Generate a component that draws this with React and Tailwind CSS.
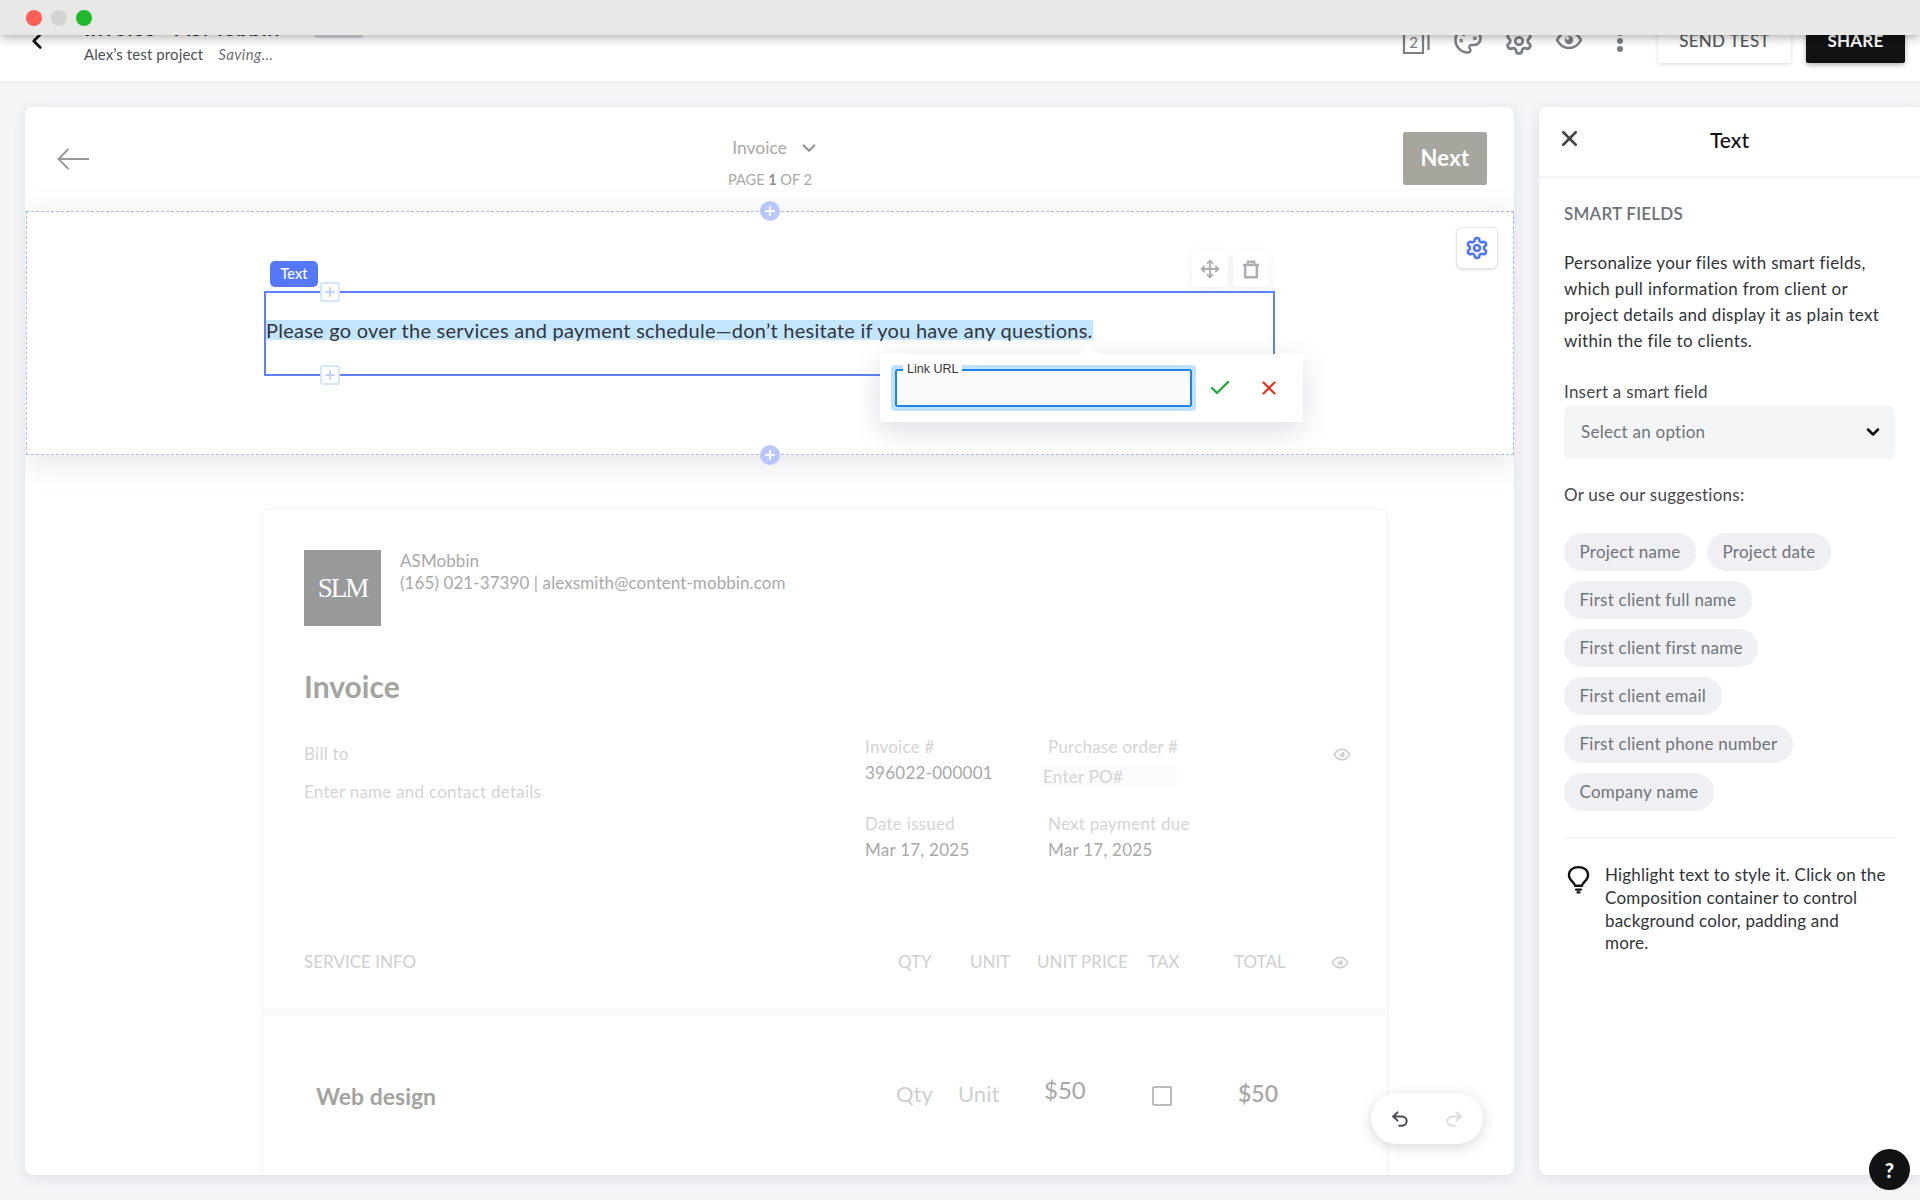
import React from 'react';
import { Check, ChevronDown, ChevronLeft, Move, Palette, Plus, Redo2, Settings, Undo2, X } from 'lucide-react';

const suggestions = [
  ['Project name', 'Project date'],
  ['First client full name'],
  ['First client first name'],
  ['First client email'],
  ['First client phone number'],
  ['Company name'],
];

const EyeIcon = ({ className }) => (
  <svg viewBox="0 0 28 20" fill="none" className={className}>
    <path d="M2 10C5 4.500 9 2 14 2s9 2.500 12 8c-3 5.500-7 8-12 8s-9-2.500-12-8z" stroke="currentColor" strokeWidth="2.600" />
    <circle cx="14" cy="10" r="4.200" fill="currentColor" />
    <circle cx="12.500" cy="8" r="1.700" fill="white" />
  </svg>
);

const TrashIcon = () => (
  <svg viewBox="0 0 20 20" className="h-[19px] w-[18px]" fill="none" stroke="#adaeb1" strokeWidth="2.800">
    <path d="M1 5h18M6.500 5V1.500h7V5M3.500 5v13.500h13V5" />
  </svg>
);

const Bulb = () => (
  <svg viewBox="0 0 24 30" className="h-[29px] w-[23px]" fill="none" stroke="#111" strokeWidth="2.400" strokeLinecap="round">
    <path d="M8.500 21.500C7.500 17.500 2 16 2 10.500 2 5 6.500 2 12 2s10 3 10 8.500c0 5.500-5.500 7-6.500 11z" />
    <path d="M9.500 25.500h5" />
    <path d="M11 28.500h2" />
  </svg>
);

const AddSquare = ({ className }) => (
  <div className={`absolute left-[54px] flex h-[20px] w-[20px] items-center justify-center rounded-[3px] border-2 border-[#d3e6fd] bg-white ${className}`}>
    <Plus size={14} strokeWidth={3} color="#bccafd" />
  </div>
);

const AddCircle = ({ className }) => (
  <div className={`absolute left-[733px] flex h-[20px] w-[20px] items-center justify-center rounded-full bg-[#b8c7fd] ${className}`}>
    <Plus size={14} strokeWidth={3.500} color="white" />
  </div>
);

const App = () => {
  return (
    <div className="relative flex h-[1200px] w-[1920px] flex-col overflow-hidden bg-[#f4f5f7] font-['Lato',sans-serif] text-[#33363b]">
      {/* Window bar */}
      <div className="absolute inset-x-0 top-0 z-50 flex h-[35px] items-center gap-[9px] bg-[#e8e8e6] pl-[26px] shadow-[0_2px_10px_rgba(0,0,0,0.35)]">
        <span className="h-[16px] w-[16px] rounded-full bg-[#fb5f57]" />
        <span className="h-[16px] w-[16px] rounded-full bg-[#d3d3d3]" />
        <span className="h-[16px] w-[16px] rounded-full bg-[#1fb82e]" />
      </div>

      {/* Top bar */}
      <header className="flex h-[81px] shrink-0 items-start bg-white shadow-[0_1px_3px_rgba(0,0,0,0.04)]">
        <div className="ml-[24px] mt-[28px] w-[60px]">
          <ChevronLeft size={26} strokeWidth={2.500} color="#111" />
        </div>
        <div className="mt-[12px]">
          <div className="flex items-center">
            <span className="h-[32px] text-[22px] font-semibold leading-[32px] tracking-[0.3px] text-[#222]">Invoice - ASMobbin</span>
            <span className="ml-[34px] h-[26px] w-[49px] self-start rounded bg-[#d8dade]" />
          </div>
          <div className="flex h-[20px] items-center text-[15px] leading-[20px] tracking-[0.1px] text-[#4b5055]">
            <span>Alex’s test project</span>
            <span className="ml-[15px] italic tracking-[0.4px] text-[#6b7075]">Saving...</span>
          </div>
        </div>
        <div className="ml-auto mr-[15px] mt-[20px] flex items-start text-[#7b7e83]">
          <svg viewBox="0 0 28 30" className="mr-[23px] mt-[5px] h-[30px] w-[28px]" fill="none" stroke="currentColor" strokeWidth="2.200">
            <path d="M21 3v25H2V6h19" />
            <path d="M26.500 3v22" />
            <text x="11.500" y="23" fontSize="15" textAnchor="middle" fill="currentColor" stroke="none" fontFamily="Lato, sans-serif">2</text>
          </svg>
          <Palette size={30} strokeWidth={2} className="mr-[21px] mt-[5px]" />
          <Settings size={30} strokeWidth={2.200} className="mr-[21px] mt-[6px]" />
          <EyeIcon className="mr-[34px] mt-[10px] h-[20px] w-[28px]" />
          <div className="mr-[35px] mt-[10px] flex w-[6px] flex-col gap-[2px]">
            <span className="h-[6px] w-[6px] rounded-full bg-current" />
            <span className="h-[6px] w-[6px] rounded-full bg-current" />
            <span className="h-[6px] w-[6px] rounded-full bg-current" />
          </div>
          <button className="flex h-[43px] w-[133px] items-center justify-center rounded-[2px] bg-white pb-[2px] text-[17px] font-medium tracking-[0.3px] text-[#55585d] shadow-[0_1px_4px_rgba(0,0,0,0.16)]">SEND TEST</button>
          <button className="ml-[15px] flex h-[43px] w-[99px] items-center justify-center rounded-[2px] bg-[#111213] pb-[2px] text-[17px] font-bold tracking-[0.2px] text-white shadow-[0_2px_5px_rgba(0,0,0,0.3)]">SHARE</button>
        </div>
      </header>

      <div className="flex min-h-0 flex-1 gap-[25px] pl-[25px] pt-[26px] pb-[25px]">
        {/* Editor card */}
        <main className="relative flex w-[1489px] flex-col overflow-hidden rounded-[8px] bg-white shadow-[0_3px_14px_rgba(30,40,70,0.1)]">
          <div className="flex h-[104px] shrink-0 items-start justify-between bg-white pl-[32px] pr-[27px] pt-[25px]">
            <svg viewBox="0 0 32 22" className="mt-[16px] h-[22px] w-[32px]" fill="none" stroke="#999" strokeWidth="2">
              <path d="M1.500 11H32M11.500 1L1.500 11l10 10" />
            </svg>
            <div className="ml-[48px] flex flex-col items-center pt-[3px]">
              <div className="ml-[12px] flex h-[26px] items-center text-[17.500px] text-[#a8a8a8]">
                Invoice
                <ChevronDown size={22} strokeWidth={2} color="#8f8f8f" className="ml-[11px]" />
              </div>
              <div className="mt-[9px] text-[14.500px] leading-[20px] text-[#a8a8a8]">
                PAGE <b className="font-bold text-[#8f8f8f]">1</b> OF 2
              </div>
            </div>
            <button className="flex h-[53px] w-[84px] items-center justify-center rounded-[2px] bg-[#a6a69f] pb-[2px] text-[22px] font-bold tracking-[0.3px] text-white">Next</button>
          </div>

          {/* Selected composition */}
          <section className="relative z-10 ml-px h-[244px] w-[1488px] shrink-0 border border-dashed border-[#a9bdfb] bg-white pl-[237px] pt-[79px] shadow-[0_6px_30px_rgba(30,40,70,0.13)]">
            <AddCircle className="top-[-11px]" />
            <AddCircle className="bottom-[-11px]" />
            <button className="absolute right-[15px] top-[15px] flex h-[42px] w-[42px] items-center justify-center rounded-[6px] border border-[#e3e5e9] bg-white shadow-[0_1px_3px_rgba(0,0,0,0.12)]">
              <Settings size={24} strokeWidth={2.600} color="#4f76f6" />
            </button>

            <div className="relative flex h-[85px] w-[1011px] items-center border-2 border-[#5f80f8] pb-[7px]">
              <span className="bg-[#c3e5fd] text-[20px] leading-[20px] tracking-[0.25px] text-[#33363b]">Please go over the services and payment schedule—don’t hesitate if you have any questions.</span>
              <span className="absolute left-[4px] top-[-32px] flex h-[26px] w-[48px] items-center justify-center rounded-[5px] bg-[#5578fa] text-[14.500px] font-medium text-white">Text</span>
              <AddSquare className="top-[-11px]" />
              <AddSquare className="bottom-[-11px]" />
              <div className="absolute right-[4px] top-[-42px] flex gap-[5px]">
                <div className="flex h-[36px] w-[36px] items-center justify-center rounded-[4px] bg-white shadow-[0_2px_10px_rgba(0,0,0,0.07)]">
                  <Move size={20} strokeWidth={2.200} color="#adaeb1" />
                </div>
                <div className="flex h-[36px] w-[36px] items-center justify-center rounded-[4px] bg-white shadow-[0_2px_10px_rgba(0,0,0,0.07)]">
                  <TrashIcon />
                </div>
              </div>

              {/* Link popup */}
              <div className="absolute left-[614px] top-[61px] z-10 flex h-[68px] w-[423px] items-center rounded-[2px] bg-white pl-[11px] shadow-[0_8px_28px_rgba(30,40,70,0.16)]">
                <span className="absolute left-[202px] top-[-6px] h-[14px] w-[14px] rotate-45 bg-white" />
                <div className="relative h-[46px] w-[305px] rounded-[4px] border-[4px] border-[#c0e0fb]">
                  <div className="h-full w-full rounded-[2px] border-2 border-[#1d84e8] bg-[#fafafa]" />
                  <span className="absolute left-[8px] top-[-7px] bg-white px-[4px] font-['Liberation_Sans',sans-serif] text-[12.500px] leading-[14px] text-[#333]">Link URL</span>
                </div>
                <Check size={24} strokeWidth={2.400} color="#22ab3a" className="ml-[12px]" />
                <X size={22} strokeWidth={2.400} color="#e0341e" className="ml-[26px]" />
              </div>
            </div>
          </section>

          {/* Faded invoice page */}
          <section className="ml-[237px] mt-[53px] min-h-0 w-[1126px] flex-1 rounded-t-[8px] border-x border-t border-[#f5f5f5] pt-[41px]">
            <div className="flex pl-[41px]">
              <div className="flex h-[76px] w-[77px] items-center justify-center bg-[#98999b] font-['Liberation_Serif',serif] text-[27px] tracking-[-2px] text-white">SLM</div>
              <div className="ml-[19px] text-[17px] leading-[22px] tracking-[0.08px] text-[#a8a8a8]">
                <div>ASMobbin</div>
                <div>(165) 021-37390 | alexsmith@content-mobbin.com</div>
              </div>
            </div>
            <h1 className="mt-[42px] pl-[41px] text-[30px] font-bold leading-[36px] text-[#a3a3a0]">Invoice</h1>

            <div className="mt-[32px] flex pl-[41px] text-[17px] leading-[22px] tracking-[0.25px]">
              <div className="w-[561px] pt-[7px] text-[#d4d4d4]">
                <div>Bill to</div>
                <div className="mt-[16px]">Enter name and contact details</div>
              </div>
              <div className="w-[183px]">
                <div className="text-[#d4d4d4]">Invoice #</div>
                <div className="mt-[4px] text-[#a8a8a8]">396022-000001</div>
                <div className="mt-[29px] text-[#d4d4d4]">Date issued</div>
                <div className="mt-[4px] text-[#a8a8a8]">Mar 17, 2025</div>
              </div>
              <div className="w-[285px]">
                <div className="text-[#d4d4d4]">Purchase order #</div>
                <div className="ml-[-5px] mt-[8px] h-[21px] w-[134px] bg-[#fbfbfb] text-[#d4d4d4]">Enter PO#</div>
                <div className="mt-[26px] text-[#d4d4d4]">Next payment due</div>
                <div className="mt-[4px] text-[#a8a8a8]">Mar 17, 2025</div>
              </div>
              <EyeIcon className="mt-[12px] h-[13px] w-[18px] text-[#cfcfcf]" />
            </div>

            <div className="mt-[90px] grid grid-cols-[594px_72px_67px_111px_86px_97px_24px] pl-[41px] text-[17px] leading-[22px] text-[#cfcfcf]">
              <span>SERVICE INFO</span>
              <span>QTY</span>
              <span>UNIT</span>
              <span>UNIT PRICE</span>
              <span>TAX</span>
              <span>TOTAL</span>
              <EyeIcon className="mt-[5px] h-[13px] w-[18px]" />
            </div>
            <div className="mt-[35px] h-[8px] bg-[#fafafa]" />

            <div className="mt-[56px] grid h-[36px] grid-cols-[580px_62px_86px_108px_86px_60px] items-center pl-[53px]">
              <span className="text-[23px] font-bold text-[#a3a3a0]">Web design</span>
              <span className="mb-[6px] text-[22px] text-[#cfcfcf]">Qty</span>
              <span className="mb-[6px] text-[22px] text-[#cfcfcf]">Unit</span>
              <span className="mb-[12px] text-[24px] text-[#a8a8a8]">$50</span>
              <span className="h-[20px] w-[20px] rounded-[2px] border-2 border-[#bbb]" />
              <span className="mb-[6px] text-[23px] font-semibold text-[#a8a8a8]">$50</span>
            </div>
          </section>

          <div className="absolute bottom-[31px] right-[31px] z-20 flex h-[51px] w-[112px] items-center justify-between rounded-full bg-white px-[19px] shadow-[0_3px_14px_rgba(0,0,0,0.16)]">
            <Undo2 size={20} strokeWidth={2.400} color="#484b50" />
            <Redo2 size={20} strokeWidth={2.400} color="#dcdcdc" />
          </div>
        </main>

        {/* Side panel */}
        <aside className="flex min-w-0 flex-1 flex-col rounded-l-[8px] bg-white shadow-[0_3px_14px_rgba(30,40,70,0.1)]">
          <div className="relative flex h-[71px] shrink-0 items-center justify-center border-b-2 border-[#f3f4f6] pb-[3px] text-[21px] font-medium text-[#111]">
            <X size={25} strokeWidth={2.500} color="#444" className="absolute left-[18px] top-[19px]" />
            Text
          </div>
          <div className="w-[356px] pl-[25px] pt-[25px] text-[17px] leading-[26px] tracking-[0.25px] text-[#2e3338]">
            <h2 className="text-[17px] font-semibold leading-[22px] tracking-[0.2px] text-[#6d7278]">SMART FIELDS</h2>
            <p className="mt-[25px] tracking-[0.33px]">Personalize your files with smart fields, which pull information from client or project details and display it as plain text within the file to clients.</p>
            <div className="mt-[25px] leading-[26px] text-[#43474c]">Insert a smart field</div>
            <div className="mt-[1px] flex h-[53px] w-[331px] items-center justify-between rounded-[5px] bg-[#f4f5f7] pb-[1px] pl-[17px] pr-[12px] text-[#6f7479]">
              Select an option
              <ChevronDown size={20} strokeWidth={3} color="#111" />
            </div>
            <div className="mt-[23px] text-[#43474c]">Or use our suggestions:</div>
            <div className="mt-[25px] flex flex-col gap-[10px]">
              {suggestions.map((row) => (
                <div key={row[0]} className="flex gap-[11px]">
                  {row.map((label) => (
                    <span key={label} className="flex h-[38px] items-center rounded-full bg-[#eef0f4] px-[15.500px] text-[#6f7479]">{label}</span>
                  ))}
                </div>
              ))}
            </div>
            <div className="mt-[26px] h-px w-[331px] bg-[#eeeeee]" />
            <div className="mt-[26px] flex w-[331px] items-start">
              <div className="ml-[3px] mt-[1px] w-[38px] shrink-0"><Bulb /></div>
              <p className="leading-[22.800px] tracking-[0.2px]">Highlight text to style it. Click on the Composition container to control background color, padding and<br />more.</p>
            </div>
          </div>
        </aside>
      </div>

      <button className="absolute bottom-[10px] right-[10px] z-30 flex h-[41px] w-[41px] items-center justify-center rounded-full bg-[#111213] text-[20px] font-black text-white">?</button>
    </div>
  );
};

export default App;
